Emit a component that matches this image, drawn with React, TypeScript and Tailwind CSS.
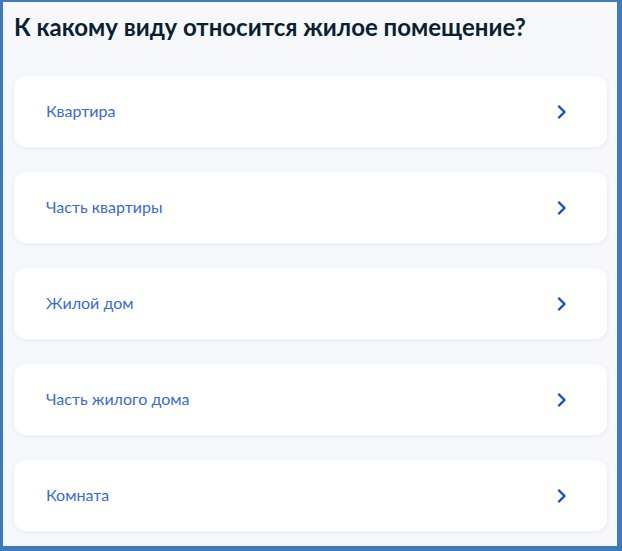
const items = ['Квартира', 'Часть квартиры', 'Жилой дом', 'Часть жилого дома', 'Комната'];

function Chevron() {
  return (
    <svg width="14" height="16" viewBox="0 0 14 16" fill="none">
      <path d="M4 2.5L9.5 8L4 13.5" stroke="#0d4cd3" strokeWidth="2.4" strokeLinecap="round" strokeLinejoin="round" />
    </svg>
  );
}

export default function App() {
  return (
    <div
      className="w-[622px] h-[551px] overflow-hidden bg-[#f6f8fc] border-[#3f7abd] border-t-2 border-l-[3px] border-r-[5px] border-b-[5px] pl-[11px] pr-[10px] pt-[9px]"
      style={{ fontFamily: 'Lato, "Noto Sans", sans-serif' }}>
      <h1 className="text-[24px] leading-[32px] font-bold text-[#0b1f33]">
        К какому виду относится жилое помещение?
      </h1>
      <div className="mt-[33px] flex flex-col gap-[25px]">
        {items.map((item) => (
          <div
            key={item}
            className="h-[71px] bg-white rounded-[12px] shadow-[0_1px_4px_rgba(30,70,150,0.08)] flex items-center justify-between pl-[32px] pr-[38px]">
            <span className="text-[16px] leading-[20px] text-[#3a68dc] -mt-[2px]">{item}</span>
            <Chevron />
          </div>
        ))}
      </div>
    </div>
  );
}
